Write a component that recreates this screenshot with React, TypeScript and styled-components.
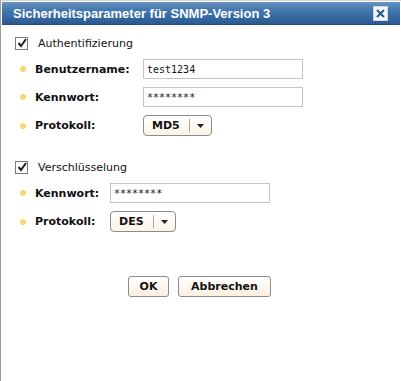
import React from "react";
import styled, { createGlobalStyle } from "styled-components";

const Global = createGlobalStyle`
  html, body { margin: 0; padding: 0; background: #ffffff; }
  body { font-family: "DejaVu Sans", Verdana, sans-serif; }
`;

const Dialog = styled.div`
  width: 398px;
  height: 380px;
  border-top: 1px solid #d6d6d6;
  border-left: 1px solid #9a9a9a;
  border-right: 1px solid #9a9a9a;
  background: #ffffff;
  display: flex;
  flex-direction: column;
  padding: 1px 1px 0 1px;
  box-sizing: content-box;
`;

const TitleBar = styled.div`
  height: 22px;
  display: flex;
  align-items: center;
  justify-content: space-between;
  padding: 0 12px 0 11px;
  background: linear-gradient(#6a94c2 0%, #4a7bb0 30%, #3567a0 70%, #2b5a90 100%);
  border-bottom: 1px solid #244d7c;
`;

const Title = styled.span`
  color: #ffffff;
  font-family: "Liberation Sans", Arial, sans-serif;
  font-weight: bold;
  font-size: 13px;
`;

const CloseButton = styled.button`
  width: 15px;
  height: 15px;
  padding: 0;
  border: 1px solid #c9d6e4;
  background: #f4f7fb;
  display: flex;
  align-items: center;
  justify-content: center;
`;

const Body = styled.div`
  padding: 11px 0 0 13px;
  display: flex;
  flex-direction: column;
`;

const CheckRow = styled.label<{ $mt: number }>`
  display: flex;
  align-items: center;
  gap: 10px;
  height: 14px;
  font-size: 11px;
  color: #111;
  margin-top: ${(p) => p.$mt}px;
  margin-bottom: 9px;
`;

const Box = styled.span`
  width: 11px;
  height: 11px;
  flex-shrink: 0;
  border: 1px solid #7a7a7a;
  background: #fff;
  display: flex;
  align-items: center;
  justify-content: center;
`;

const Fields = styled.div<{ $label: number }>`
  display: grid;
  grid-template-columns: ${(p) => p.$label}px auto;
  row-gap: 8px;
  align-items: center;
  justify-items: start;
  padding-left: 5px;
`;

const FieldLabel = styled.div`
  display: flex;
  align-items: center;
  gap: 9px;
  font-weight: bold;
  font-size: 11px;
  color: #111;
  white-space: nowrap;
`;

const Dot = styled.span`
  width: 6px;
  height: 6px;
  flex-shrink: 0;
  border-radius: 50%;
  background: #f6da6b;
`;

const TextInput = styled.input`
  width: 160px;
  height: 20px;
  box-sizing: border-box;
  border: 1px solid #c4c4c4;
  padding: 0 3px;
  font-family: "DejaVu Sans Mono", monospace;
  font-size: 10px;
  color: #111;
  outline: none;
`;

const Select = styled.div<{ $w: number }>`
  width: ${(p) => p.$w}px;
  height: 21px;
  box-sizing: border-box;
  border: 1px solid #8c8c8c;
  border-radius: 4px;
  background: linear-gradient(#ffffff, #fbf3e6);
  display: flex;
  align-items: center;
  font-weight: bold;
  font-size: 11px;
  color: #111;
`;

const SelectValue = styled.span`
  flex: 1;
  padding-left: 8px;
`;

const SelectArrow = styled.span`
  width: 21px;
  height: 13px;
  border-left: 1px solid #aaa;
  display: flex;
  align-items: center;
  justify-content: center;
`;

const Buttons = styled.div`
  display: flex;
  gap: 9px;
  padding-left: 113px;
  margin-top: 44px;
`;

const Button = styled.button<{ $w: number }>`
  width: ${(p) => p.$w}px;
  height: 21px;
  border: 1px solid #8c8c8c;
  border-radius: 3px;
  background: linear-gradient(#ffffff, #fbefe0);
  font-family: "DejaVu Sans", Verdana, sans-serif;
  font-weight: bold;
  font-size: 11px;
  color: #111;
  padding: 0;
`;

const Check = () => (
  <Box>
    <svg width="10" height="10" viewBox="0 0 10 10">
      <path d="M1.5 5 L4 8 L9 1" stroke="#222" strokeWidth="2" fill="none" />
    </svg>
  </Box>
);

const Arrow = () => (
  <svg width="7" height="4" viewBox="0 0 7 4">
    <path d="M0 0 H7 L3.5 4 Z" fill="#222" />
  </svg>
);

export default function App() {
  return (
    <>
      <Global />
      <Dialog>
        <TitleBar>
          <Title>Sicherheitsparameter für SNMP-Version 3</Title>
          <CloseButton>
            <svg width="11" height="11" viewBox="0 0 11 11">
              <path d="M2 2 L9 9 M9 2 L2 9" stroke="#2b5a90" strokeWidth="2" />
            </svg>
          </CloseButton>
        </TitleBar>
        <Body>
          <CheckRow $mt={0}>
            <Check />
            Authentifizierung
          </CheckRow>
          <Fields $label={123}>
            <FieldLabel><Dot />Benutzername:</FieldLabel>
            <TextInput defaultValue="test1234" />
            <FieldLabel><Dot />Kennwort:</FieldLabel>
            <TextInput defaultValue="********" />
            <FieldLabel><Dot />Protokoll:</FieldLabel>
            <Select $w={69}><SelectValue>MD5</SelectValue><SelectArrow><Arrow /></SelectArrow></Select>
          </Fields>
          <CheckRow $mt={24}>
            <Check />
            Verschlüsselung
          </CheckRow>
          <Fields $label={90}>
            <FieldLabel><Dot />Kennwort:</FieldLabel>
            <TextInput defaultValue="********" />
            <FieldLabel><Dot />Protokoll:</FieldLabel>
            <Select $w={66}><SelectValue>DES</SelectValue><SelectArrow><Arrow /></SelectArrow></Select>
          </Fields>
          <Buttons>
            <Button $w={41}>OK</Button>
            <Button $w={93}>Abbrechen</Button>
          </Buttons>
        </Body>
      </Dialog>
    </>
  );
}
